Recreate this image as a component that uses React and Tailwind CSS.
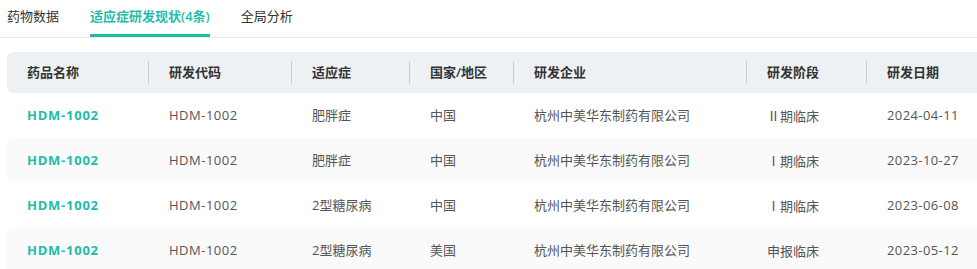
import React from 'react'

const COLS = [
  { key: 'name', label: '药品名称', w: 'w-[141px]' },
  { key: 'code', label: '研发代码', w: 'w-[143px]' },
  { key: 'ind', label: '适应症', w: 'w-[118px]' },
  { key: 'country', label: '国家/地区', w: 'w-[104px]' },
  { key: 'company', label: '研发企业', w: 'w-[233px]' },
  { key: 'stage', label: '研发阶段', w: 'w-[120px]' },
  { key: 'date', label: '研发日期', w: 'flex-1' },
]

const ROWS = [
  { name: 'HDM-1002', code: 'HDM-1002', ind: '肥胖症', country: '中国', company: '杭州中美华东制药有限公司', stage: 'Ⅱ期临床', date: '2024-04-11' },
  { name: 'HDM-1002', code: 'HDM-1002', ind: '肥胖症', country: '中国', company: '杭州中美华东制药有限公司', stage: 'Ⅰ期临床', date: '2023-10-27' },
  { name: 'HDM-1002', code: 'HDM-1002', ind: '2型糖尿病', country: '中国', company: '杭州中美华东制药有限公司', stage: 'Ⅰ期临床', date: '2023-06-08' },
  { name: 'HDM-1002', code: 'HDM-1002', ind: '2型糖尿病', country: '美国', company: '杭州中美华东制药有限公司', stage: '申报临床', date: '2023-05-12' },
]

const TABS = ['药物数据', '适应症研发现状(4条)', '全局分析']

// per-column extra styling for the body cells
const CELL = {
  name: 'text-[#1fbcac] font-bold tracking-[0.75px]',
  code: 'text-[#555] tracking-[0.5px]',
  ind: 'text-[#555]',
  country: 'text-[#555]',
  company: 'text-[#555]',
  stage: 'text-[#555] [font-family:"Noto_Sans_CJK_SC",sans-serif]',
  date: 'text-[#555] tracking-[0.4px]',
}

export default function App() {
  return (
    <div
      className="w-[977px] h-[269px] overflow-hidden bg-white text-[13px]"
      style={{ fontFamily: '"Open Sans", "Noto Sans CJK SC", sans-serif' }}
    >
      {/* tabs */}
      <div className="flex h-[38px] border-b border-[#e8e8e8] pl-[7px] gap-[31px]">
        {TABS.map((t, i) => (
          <div
            key={t}
            className={`flex items-center h-full -mb-px border-b-[3px] ${
              i === 1 ? 'border-[#1fbcac] text-[#1fbcac] font-semibold' : 'border-transparent text-[#333]'
            }`}
          >
            {t}
          </div>
        ))}
      </div>

      {/* table */}
      <div className="pl-[7px] pt-[14px]">
        <div className="flex h-[41px] items-center bg-[#eef1f3] rounded-l-md text-[#333] font-semibold">
          {COLS.map((c, i) => (
            <div key={c.key} className={`${c.w} shrink-0 flex items-center h-full`}>
              {i > 0 && <div className="w-px h-[23px] bg-[#c5cfcd]" />}
              <div className="pl-[20px]">{c.label}</div>
            </div>
          ))}
        </div>
        {ROWS.map((r, ri) => (
          <div
            key={ri}
            className={`flex h-[45px] items-center rounded-l-md pt-px ${ri % 2 === 1 ? 'bg-[#fafafa]' : 'bg-white'}`}
          >
            {COLS.map((c, i) => (
              <div key={c.key} className={`${c.w} shrink-0 ${i > 0 ? 'pl-[21px]' : 'pl-[20px]'} ${CELL[c.key]}`}>
                {r[c.key]}
              </div>
            ))}
          </div>
        ))}
      </div>
    </div>
  )
}
